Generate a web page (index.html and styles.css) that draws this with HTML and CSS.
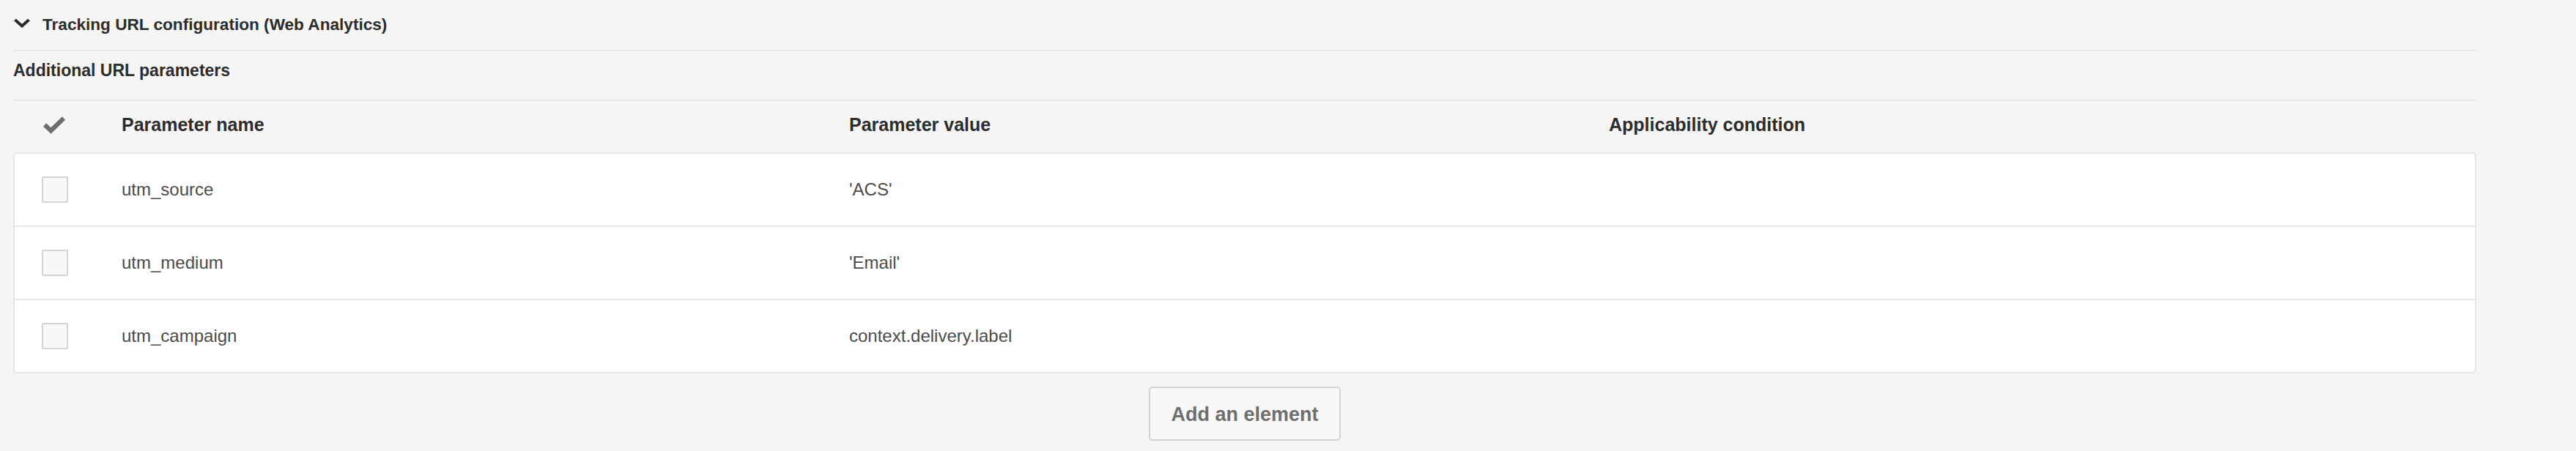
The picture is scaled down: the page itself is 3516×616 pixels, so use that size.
FILE: index.html
```html
<!DOCTYPE html>
<html lang="en">
<head>
<meta charset="utf-8">
<title>Tracking URL configuration</title>
<link rel="stylesheet" href="styles.css">
</head>
<body>
<div class="panel">
  <div class="section-head">
    <svg class="chev" width="24" height="13" viewBox="0 0 24 13" aria-hidden="true"><polyline points="2.5,2 12,10.5 21.5,2" fill="none" stroke="#2c2c2c" stroke-width="4"/></svg>
    <span class="section-title">Tracking URL configuration (Web Analytics)</span>
  </div>
  <div class="sub-head">Additional URL parameters</div>
  <div class="grid-head">
    <div class="cell-check"><svg class="check" width="32" height="24" viewBox="0 0 32 24" aria-hidden="true"><polyline points="3,11.5 11.5,19.5 29,2.5" fill="none" stroke="#6e6e6e" stroke-width="6"/></svg></div>
    <div class="th">Parameter name</div>
    <div class="th">Parameter value</div>
    <div class="th">Applicability condition</div>
  </div>
  <div class="table">
    <div class="row">
      <div class="cell-check"><span class="box"></span></div>
      <div class="td">utm_source</div>
      <div class="td">&#39;ACS&#39;</div>
      <div class="td"></div>
    </div>
    <div class="row">
      <div class="cell-check"><span class="box"></span></div>
      <div class="td">utm_medium</div>
      <div class="td">&#39;Email&#39;</div>
      <div class="td"></div>
    </div>
    <div class="row">
      <div class="cell-check"><span class="box"></span></div>
      <div class="td">utm_campaign</div>
      <div class="td">context.delivery.label</div>
      <div class="td"></div>
    </div>
  </div>
  <div class="actions">
    <button class="btn" type="button">Add an element</button>
  </div>
</div>
</body>
</html>
```
FILE: styles.css
```css
html, body {
  margin: 0;
  padding: 0;
  background: #f5f5f5;
}
body {
  font-family: "Liberation Sans", Arial, sans-serif;
  color: #2c2c2c;
  width: 3516px;
  height: 616px;
  overflow: hidden;
}
.panel {
  margin-left: 18px;
  width: 3362px;
}
.section-head {
  display: flex;
  align-items: center;
  gap: 16px;
  height: 68px;
  border-bottom: 2px solid #e8e8e8;
}
.chev {
  display: block;
  margin-bottom: 5px;
}
.section-title {
  font-size: 22.6px;
  font-weight: 700;
  line-height: 68px;
  color: #2c2c2c;
}
.sub-head {
  padding: 8px 0 22px;
  line-height: 36px;
  font-size: 23px;
  font-weight: 700;
  color: #2c2c2c;
  border-bottom: 2px solid #e8e8e8;
}
.grid-head,
.row {
  display: grid;
  grid-template-columns: 146px 993px 1037px 1fr;
  align-items: center;
}
.grid-head {
  height: 65px;
  margin-bottom: 5px;
  padding: 0 2px;
}
.th {
  font-size: 25px;
  font-weight: 700;
  line-height: 65px;
  color: #2c2c2c;
  white-space: nowrap;
}
.grid-head .cell-check {
  padding-left: 38px;
}
.check {
  display: block;
}
.table {
  background: #ffffff;
  border: 2px solid #e6e6e6;
  border-radius: 5px;
}
.row {
  height: 98px;
}
.row + .row {
  border-top: 2px solid #e8e8e8;
}
.row .cell-check {
  padding-left: 37px;
}
.box {
  display: block;
  box-sizing: border-box;
  width: 36px;
  height: 36px;
  border: 2px solid #d4d4d4;
  border-radius: 2px;
  background: #f8f8f8;
}
.td {
  font-size: 24px;
  line-height: 98px;
  color: #4b4b4b;
  white-space: nowrap;
}
.actions {
  display: flex;
  justify-content: center;
  margin-top: 18px;
}
.btn {
  box-sizing: border-box;
  width: 262px;
  height: 74px;
  padding: 3px 0 0;
  border: 2px solid #d3d3d3;
  border-radius: 5px;
  background: #f8f8f8;
  color: #6e6e6e;
  font-family: "Liberation Sans", Arial, sans-serif;
  font-size: 27px;
  font-weight: 700;
  line-height: 67px;
  text-align: center;
}
```
